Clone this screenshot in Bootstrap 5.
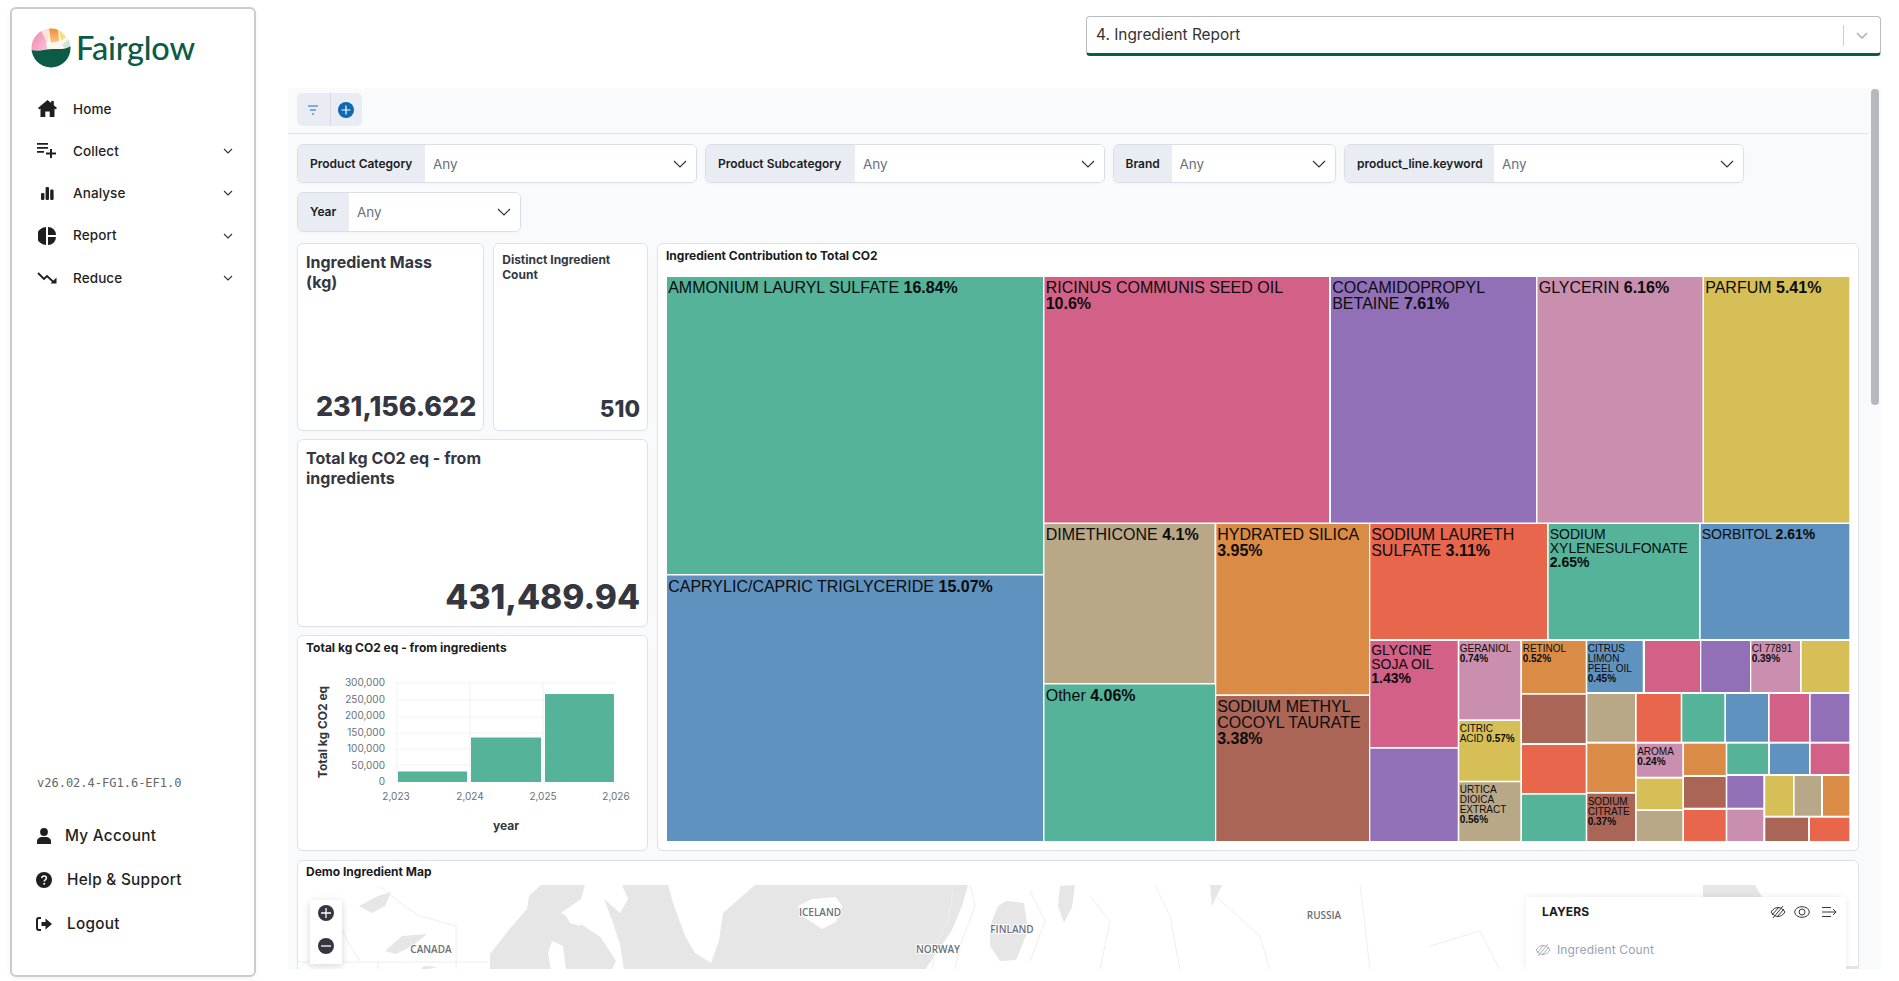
<!DOCTYPE html>
<html lang="en">
<head>
<meta charset="utf-8">
<title>Fairglow - Ingredient Report</title>
<link href="https://cdn.jsdelivr.net/npm/bootstrap@5.3.0/dist/css/bootstrap.min.css" rel="stylesheet">
<style>
html,body{height:100%;overflow:hidden;background:#fff}
body{font-family:Inter,"Liberation Sans",sans-serif;color:#1a1c21}
.app{height:981px}
.side{width:246px;height:970px;margin:7px 32px 0 10px;border:2px solid #ccc;border-radius:6px;flex:none;padding:0;box-shadow:0 2px 6px rgba(0,0,0,.05)}
.brand{height:78.5px;padding:0 0 0 19px;gap:5px;align-items:center}
.brand-name{font-family:Lato,Inter,sans-serif;font-size:32.5px;color:#0b5b46;font-weight:500;letter-spacing:-.2px;line-height:1;padding-top:0}
.side-link{height:42.3px;padding:0 21px 0 25px;color:#1f1f1f;font-size:13.5px;font-weight:500;letter-spacing:.1px}
.side-link:hover{color:#1f1f1f}
.ico{width:20px;flex:none;margin-right:16px;display:flex;justify-content:center}
.ver{font-family:"DejaVu Sans Mono","Liberation Mono",monospace;font-size:12px;color:#666;padding-left:25px;margin-bottom:23px;line-height:15px}
.foot-link{height:44px;padding:0 0 0 23px;color:#1f1f1f;font-size:15.3px;letter-spacing:.3px;font-weight:500}
.foot-link:hover{color:#1f1f1f}
.foot-ico{width:18px;margin-right:12px;flex:none;display:flex;justify-content:center}
.help-txt{padding-left:2px}
.foot-box{padding-bottom:29px}
.main-col{width:1593px;flex:none}
.top-row{height:88px;padding-top:16px}
.report-select{width:795px;height:40px;margin-left:auto;border:1px solid #bbb;border-bottom:3px solid #0b5b46;border-radius:4px;padding-left:9px;font-size:15.4px;color:#333}
.report-sep{width:1px;height:21px;background:#ccc;margin-left:auto}
.report-chev{width:36px;display:flex;justify-content:center}
.dash{height:881px;background:#f9fafc}
.tool-wrap{width:1580px;height:46px;padding:5px 9px 0;border-bottom:1px solid #dfe3e8}
.tool-group{height:33px;background:#e9edf3;border-radius:5px;width:65px}
.tool-btn{width:32.5px;display:flex;align-items:center;justify-content:center}
.tool-btn+.tool-btn{border-left:1px solid #d3dae6}
.filters{padding:9.5px 0 0 9px;row-gap:9px;column-gap:8px;width:1500px}
.fgroup{height:39.5px;border:1px solid #d9dfe8;border-radius:6px;background:#fff;overflow:hidden;box-shadow:0 1px 2px rgba(0,0,0,.03)}
.flabel{background:#e9edf3;font-size:12px;font-weight:600;color:#1a1c21;height:100%;padding:1px 0 0 12px;flex:none}
.fselect{height:100%;font-size:13.5px;color:#69707d;background-color:#fff;padding:1px 0 0 8px;flex:1 1 auto;display:flex;align-items:center;justify-content:space-between}
.fchev{margin-right:9px}
.w-cat{width:400px}.w-sub{width:399.500px}.w-brand{width:223.500px}.w-line{width:400px}.w-year{width:224px}
.l-cat{width:127px}.l-sub{width:149px}.l-brand{width:58px}.l-line{width:149px}.l-year{width:51px}
.grid-wrap{padding:11.500px 0 0 9px;width:1571px;gap:9px}
.col-left{width:351px;gap:8px;height:608px}
.col-right{width:1202px;height:608px}
.tile-card{--bs-card-border-color:#dde2ea;--bs-card-border-radius:6px;--bs-card-inner-border-radius:5px;background:#fff;box-shadow:0 1px 2px rgba(0,0,0,.02)}
.kpi-row{gap:9px;height:188px;flex:none}
.kpi-a{width:187.500px}.kpi-b{width:155px}
.kpi-c{height:188px;flex:none;padding:8px 7px 9px 8px}
.kpi-a,.kpi-b{padding:8px 7px 7px 8px}
.kpi-title{font-size:16px;line-height:20px;font-weight:650;color:#343741}
.kpi-title-sm{font-size:12px;line-height:15px;font-weight:650;color:#343741}
.kpi-val{text-align:right;font-weight:800;color:#343741;font-size:26.800px;line-height:30px;padding-bottom:2px}
.kpi-val-md{text-align:right;font-weight:800;color:#343741;font-size:22.500px;line-height:28px}
.kpi-val-lg{text-align:right;font-weight:800;color:#343741;font-size:33.500px;line-height:40px}
.chart-title{font-size:12px;font-weight:700;color:#1a1c21;line-height:15px}
.bar-card{height:216px;flex:none}
.bar-head{height:24px;padding:4px 0 0 8px}
.tm-head{height:33px;padding:4px 0 0 8px}
.tm-svg{display:block;margin-left:9px;width:1183px;height:564px}
.bar-svg{display:block;width:349px;height:190px}
.tlb{font-family:"Liberation Sans",Arial,sans-serif;fill:#0c0c0c;transform:translateX(-.8px)}
.t16{font-size:16px}.t14{font-size:14px}.t10{font-size:10px}
.pc{font-weight:700}
.tk{font-family:Inter,sans-serif;font-size:10px;fill:#69707d}
.ax{font-family:Inter,sans-serif;font-size:12px;font-weight:700;fill:#343741}
.grd{stroke:#f1f2f4;stroke-width:1}
.map-card{margin:9px 0 0 9px;width:1562px;height:140px}
.map-head{height:24px;padding:3px 0 0 8px}
.map-area{height:85px}
.map-svg{display:block;width:1560px;height:85px}
.ml{font-family:"Open Sans",sans-serif;font-size:10px;font-weight:600;fill:#6a6f78;paint-order:stroke;stroke:#fff;stroke-width:2px}
.zoom-box{position:absolute;left:12px;top:15px;width:32px;height:64px;background:#fff;box-shadow:0 2px 8px rgba(0,0,0,.16);display:flex;flex-direction:column;align-items:center;gap:17px;padding-top:5px}
.layers{position:absolute;left:1228px;top:12px;width:320px;height:73px;background:#fff;box-shadow:0 0 8px rgba(0,0,0,.08);padding:0 9px 0 16px}
.layers-head{height:30px;font-size:12px;font-weight:700;color:#1a1c21;letter-spacing:.1px}
.layers-row{margin-top:14px;font-size:12px;color:#98a2b3;margin-left:-7px;gap:6px;letter-spacing:.15px}
.scroll-thumb{position:absolute;right:2px;top:1px;width:8px;height:316px;border-radius:4px;background:#b5b9be}
.c-teal{fill:#54b399}.c-blue{fill:#6092c0}.c-pink{fill:#d36086}.c-purp{fill:#9170b8}.c-lpink{fill:#ca8eae}.c-yel{fill:#d6bf57}.c-tan{fill:#b9a888}.c-brn{fill:#aa6556}.c-org{fill:#da8b45}.c-red{fill:#e7664c}
</style>
</head>
<body>
<div class="app d-flex">
  <aside class="side d-flex flex-column bg-white">
    <div class="brand d-flex">
      <svg width="40" height="40" viewBox="0 0 40 40">
        <defs><clipPath id="lg"><circle cx="20" cy="20" r="19.500"/></clipPath>
        <linearGradient id="lgp" x1="0" y1="0" x2="1" y2="1"><stop offset="0" stop-color="#f07fb0"/><stop offset="1" stop-color="#fbc4d6"/></linearGradient>
        <linearGradient id="lgo" x1="0" y1="0" x2="0" y2="1"><stop offset="0" stop-color="#f28a2e"/><stop offset="1" stop-color="#fbc98a"/></linearGradient></defs>
        <g clip-path="url(#lg)">
          <rect width="40" height="40" fill="#fdf6ee"/>
          <path d="M0 24 L0 6 L9 0 L15 12 L16 21 Z" fill="url(#lgp)"/>
          <path d="M9 0 L17 16 L18 0 Z" fill="#fbe3d8"/>
          <path d="M18 0 L20 15 L28 13 L27 0 Z" fill="url(#lgo)"/>
          <path d="M28 1 L30 13 L35 9 Z" fill="#f6e07a"/>
          <path d="M31 17 L39 10 L40 19 L34 20Z" fill="#cfe5d8"/>
          <path d="M0 22 C8 24 14 21 22 21 C28 21 34 22 40 18 L40 40 L0 40 Z" fill="#0b5b46"/>
        </g>
      </svg>
      <span class="brand-name">Fairglow</span>
    </div>
    <nav class="nav flex-column">
      <a class="nav-link side-link d-flex align-items-center" href="#"><span class="ico"><svg width="19" height="17" viewBox="0 0 19 17"><path d="M9.500 0 L0 8 L1.200 9.400 L2.500 8.400 V17 H7.300 V11.500 H11.700 V17 H16.500 V8.400 L17.800 9.400 L19 8 L15.800 5.300 V1 H13.200 V3.100 Z" fill="#1f1f1f"/></svg></span>Home</a>
      <a class="nav-link side-link d-flex align-items-center" href="#"><span class="ico"><svg width="20" height="15" viewBox="0 0 20 15"><path d="M0 0h11v1.700H0zM0 4h11v1.700H0zM0 8h7v1.700H0zM13 6h2v3.500h4v2h-4V15h-2v-3.500H9v-2h4z" fill="#1f1f1f"/></svg></span><span class="flex-grow-1">Collect</span><svg width="10" height="6" viewBox="0 0 10 6"><path d="M1 1l4 4 4-4" fill="none" stroke="#333" stroke-width="1.100"/></svg></a>
      <a class="nav-link side-link d-flex align-items-center" href="#"><span class="ico"><svg width="13" height="13" viewBox="0 0 13 13"><rect x="0" y="6" width="3.400" height="7" rx="1.200" fill="#1f1f1f"/><rect x="4.600" y="0" width="3.400" height="13" rx="1.200" fill="#1f1f1f"/><rect x="9.200" y="2.500" width="3.400" height="10.500" rx="1.200" fill="#1f1f1f"/></svg></span><span class="flex-grow-1">Analyse</span><svg width="10" height="6" viewBox="0 0 10 6"><path d="M1 1l4 4 4-4" fill="none" stroke="#333" stroke-width="1.100"/></svg></a>
      <a class="nav-link side-link d-flex align-items-center" href="#"><span class="ico"><svg width="18" height="18" viewBox="0 0 18 18"><path d="M8 0 A9 9 0 0 0 8 18 Z M10 0 A8 8 0 0 1 18 8 H10 Z M10 10 H18 A8 8 0 0 1 10 18 Z" fill="#1f1f1f"/></svg></span><span class="flex-grow-1">Report</span><svg width="10" height="6" viewBox="0 0 10 6"><path d="M1 1l4 4 4-4" fill="none" stroke="#333" stroke-width="1.100"/></svg></a>
      <a class="nav-link side-link d-flex align-items-center" href="#"><span class="ico"><svg width="20" height="12" viewBox="0 0 20 12"><path d="M1 1l6 6 3-3 7 6.500" fill="none" stroke="#1f1f1f" stroke-width="1.800"/><path d="M19.500 5.500v6h-6z" fill="#1f1f1f"/></svg></span><span class="flex-grow-1">Reduce</span><svg width="10" height="6" viewBox="0 0 10 6"><path d="M1 1l4 4 4-4" fill="none" stroke="#333" stroke-width="1.100"/></svg></a>
    </nav>
    <div class="mt-auto foot-box">
      <div class="ver">v26.02.4-FG1.6-EF1.0</div>
      <nav class="nav flex-column">
        <a class="nav-link foot-link d-flex align-items-center" href="#"><span class="foot-ico"><svg width="14" height="16" viewBox="0 0 14 16"><circle cx="7" cy="4" r="3.900" fill="#1f1f1f"/><path d="M0 16v-2.500C0 10.500 2.500 9 5 9h4c2.500 0 5 1.500 5 4.500V16z" fill="#1f1f1f"/></svg></span>My Account</a>
        <a class="nav-link foot-link d-flex align-items-center" href="#"><span class="foot-ico"><svg width="16" height="16" viewBox="0 0 16 16"><circle cx="8" cy="8" r="8" fill="#1f1f1f"/><path d="M5.700 6.200C5.900 4.800 6.900 4.100 8.100 4.100c1.300 0 2.300.8 2.300 2 0 1.800-2.200 1.700-2.200 3.400" fill="none" stroke="#fff" stroke-width="1.500"/><circle cx="8.200" cy="11.800" r="1" fill="#fff"/></svg></span><span class="help-txt">Help &amp; Support</span></a>
        <a class="nav-link foot-link d-flex align-items-center" href="#"><span class="foot-ico"><svg width="16" height="14" viewBox="0 0 16 14"><path d="M5 1H3a2 2 0 0 0-2 2v8a2 2 0 0 0 2 2h2" fill="none" stroke="#1f1f1f" stroke-width="2"/><path d="M5.500 5h4V1.500L16 7l-6.500 5.500V9h-4z" fill="#1f1f1f"/></svg></span><span class="help-txt">Logout</span></a>
      </nav>
    </div>
  </aside>

  <main class="main-col">
    <div class="top-row d-flex">
      <div class="report-select d-flex align-items-center">
        <span>4. Ingredient Report</span>
        <span class="report-sep"></span>
        <span class="report-chev"><svg width="12" height="7" viewBox="0 0 12 7"><path d="M1 1l5 5 5-5" fill="none" stroke="#b3b3b3" stroke-width="1.600"/></svg></span>
      </div>
    </div>

    <section class="dash position-relative overflow-hidden">
      <div class="tool-wrap">
        <div class="tool-group d-flex">
          <div class="tool-btn"><svg width="12" height="10" viewBox="0 0 12 10"><path d="M1 1h10M3 5h6M5 9h2" stroke="#1272b8" stroke-width="1.100" fill="none"/></svg></div>
          <div class="tool-btn"><svg width="16" height="16" viewBox="0 0 16 16"><circle cx="8" cy="8" r="8" fill="#0f68b0"/><path d="M8 3.500v9M3.500 8h9" stroke="#fff" stroke-width="1.200"/></svg></div>
        </div>
      </div>

      <div class="filters d-flex flex-wrap">
        <div class="fgroup d-flex w-cat"><span class="flabel l-cat d-flex align-items-center">Product Category</span><span class="fselect">Any<svg class="fchev" width="14" height="8" viewBox="0 0 14 8"><path d="M1 1l6 6 6-6" fill="none" stroke="#343741" stroke-width="1.200"/></svg></span></div>
        <div class="fgroup d-flex w-sub"><span class="flabel l-sub d-flex align-items-center">Product Subcategory</span><span class="fselect">Any<svg class="fchev" width="14" height="8" viewBox="0 0 14 8"><path d="M1 1l6 6 6-6" fill="none" stroke="#343741" stroke-width="1.200"/></svg></span></div>
        <div class="fgroup d-flex w-brand"><span class="flabel l-brand d-flex align-items-center">Brand</span><span class="fselect">Any<svg class="fchev" width="14" height="8" viewBox="0 0 14 8"><path d="M1 1l6 6 6-6" fill="none" stroke="#343741" stroke-width="1.200"/></svg></span></div>
        <div class="fgroup d-flex w-line"><span class="flabel l-line d-flex align-items-center">product_line.keyword</span><span class="fselect">Any<svg class="fchev" width="14" height="8" viewBox="0 0 14 8"><path d="M1 1l6 6 6-6" fill="none" stroke="#343741" stroke-width="1.200"/></svg></span></div>
        <div class="fgroup d-flex w-year"><span class="flabel l-year d-flex align-items-center">Year</span><span class="fselect">Any<svg class="fchev" width="14" height="8" viewBox="0 0 14 8"><path d="M1 1l6 6 6-6" fill="none" stroke="#343741" stroke-width="1.200"/></svg></span></div>
      </div>

      <div class="grid-wrap d-flex">
        <div class="col-left d-flex flex-column">
          <div class="kpi-row d-flex">
            <div class="card tile-card kpi-a justify-content-between"><div class="kpi-title">Ingredient Mass<br>(kg)</div><div class="kpi-val">231,156.622</div></div>
            <div class="card tile-card kpi-b justify-content-between"><div class="kpi-title-sm">Distinct Ingredient Count</div><div class="kpi-val-md">510</div></div>
          </div>
          <div class="card tile-card kpi-c justify-content-between"><div class="kpi-title">Total kg CO2 eq - from<br>ingredients</div><div class="kpi-val-lg">431,489.94</div></div>
          <div class="card tile-card bar-card">
            <div class="bar-head chart-title">Total kg CO2 eq - from ingredients</div>
            <svg class="bar-svg" viewBox="298 660 349 190">
              <g class="grd"><path d="M397 683H616M397 700H616M397 717H616M397 733H616M397 749H616M397 765H616"/><path d="M397 682V782M470 682V782M543 682V782"/></g>
              <rect x="398" y="771.500" width="69" height="10.500" class="c-teal"/>
              <rect x="471" y="737.500" width="70" height="44.500" class="c-teal"/>
              <rect x="545" y="694" width="69" height="88" class="c-teal"/>
              <g class="tk" text-anchor="end">
                <text x="385" y="686">300,000</text><text x="385" y="703">250,000</text><text x="385" y="719">200,000</text><text x="385" y="736">150,000</text><text x="385" y="752">100,000</text><text x="385" y="769">50,000</text><text x="385" y="785">0</text>
              </g>
              <g class="tk" text-anchor="middle">
                <text x="396" y="800">2,023</text><text x="470" y="800">2,024</text><text x="543" y="800">2,025</text><text x="616" y="800">2,026</text>
              </g>
              <text class="ax" x="506" y="830" text-anchor="middle">year</text>
              <text class="ax" text-anchor="middle" transform="translate(326.500 732) rotate(-90)">Total kg CO2 eq</text>
            </svg>
          </div>
        </div>
        <div class="col-right card tile-card">
          <div class="tm-head chart-title">Ingredient Contribution to Total CO2</div>
          <svg class="tm-svg" viewBox="667 277 1183 564">
            <rect x="667" y="277" width="376" height="297" class="c-teal"/>
            <rect x="667" y="575.500" width="376" height="265.500" class="c-blue"/>
            <rect x="1044.500" y="277" width="284.500" height="245.500" class="c-pink"/>
            <rect x="1331" y="277" width="205" height="245.500" class="c-purp"/>
            <rect x="1537.500" y="277" width="165" height="245.500" class="c-lpink"/>
            <rect x="1704" y="277" width="145.300" height="245.500" class="c-yel"/>
            <rect x="1044.500" y="524" width="170" height="159" class="c-tan"/>
            <rect x="1044.500" y="684.500" width="170.500" height="156.500" class="c-teal"/>
            <rect x="1216.300" y="524" width="152.700" height="170.300" class="c-org"/>
            <rect x="1216.300" y="696" width="152.700" height="145" class="c-brn"/>
            <rect x="1370.300" y="524" width="176.700" height="115" class="c-red"/>
            <rect x="1548.700" y="524" width="150.300" height="115" class="c-teal"/>
            <rect x="1700.700" y="524" width="148.600" height="115" class="c-blue"/>
            <rect x="1370.300" y="641" width="87.400" height="106" class="c-pink"/>
            <rect x="1370.300" y="748.700" width="87.400" height="92.300" class="c-purp"/>
            <rect x="1459.300" y="641" width="61" height="78.300" class="c-lpink"/>
            <rect x="1459.300" y="721" width="61" height="59.700" class="c-yel"/>
            <rect x="1459.300" y="782.300" width="61" height="58.700" class="c-tan"/>
            <rect x="1522" y="641" width="63.700" height="52" class="c-org"/>
            <rect x="1522" y="694.700" width="63.700" height="48.300" class="c-brn"/>
            <rect x="1522" y="745" width="63.700" height="48" class="c-red"/>
            <rect x="1522" y="794.700" width="63.700" height="46.300" class="c-teal"/>
            <rect x="1587.300" y="641" width="55.400" height="51" class="c-blue"/>
            <rect x="1645" y="641" width="55" height="51" class="c-pink"/>
            <rect x="1701.300" y="641" width="48.700" height="51" class="c-purp"/>
            <rect x="1751.300" y="641" width="48.700" height="51" class="c-lpink"/>
            <rect x="1801.700" y="641" width="47.600" height="51" class="c-yel"/>
            <rect x="1587.300" y="694" width="47.700" height="47.700" class="c-tan"/>
            <rect x="1587.300" y="743.700" width="47.700" height="48.300" class="c-org"/>
            <rect x="1587.300" y="793.700" width="47.700" height="47.300" class="c-brn"/>
            <rect x="1636.700" y="694" width="44" height="47.700" class="c-red"/>
            <rect x="1682.300" y="694" width="42" height="47.700" class="c-teal"/>
            <rect x="1726" y="694" width="42" height="47.700" class="c-blue"/>
            <rect x="1769.700" y="694" width="39.300" height="47.700" class="c-pink"/>
            <rect x="1810.700" y="694" width="38.600" height="47.700" class="c-purp"/>
            <rect x="1636.700" y="743.700" width="45.600" height="33" class="c-lpink"/>
            <rect x="1684" y="743.700" width="41.700" height="31.300" class="c-org"/>
            <rect x="1727.300" y="743.700" width="40.700" height="30.300" class="c-teal"/>
            <rect x="1770" y="743.700" width="39" height="30.300" class="c-blue"/>
            <rect x="1810.700" y="743.700" width="38.600" height="30.300" class="c-pink"/>
            <rect x="1636.700" y="778.700" width="45.600" height="30.600" class="c-yel"/>
            <rect x="1636.700" y="811" width="45.600" height="30" class="c-tan"/>
            <rect x="1684" y="777" width="41.700" height="30.700" class="c-brn"/>
            <rect x="1684" y="810" width="41.700" height="31" class="c-red"/>
            <rect x="1727.300" y="776" width="36" height="31.700" class="c-purp"/>
            <rect x="1727.300" y="809.700" width="36" height="31.300" class="c-lpink"/>
            <rect x="1765.300" y="776" width="27.700" height="39.700" class="c-yel"/>
            <rect x="1794.700" y="776" width="26.300" height="39.700" class="c-tan"/>
            <rect x="1823" y="776" width="26.300" height="39.700" class="c-org"/>
            <rect x="1765.300" y="817.700" width="42.700" height="23.300" class="c-brn"/>
            <rect x="1810" y="817.700" width="39.300" height="23.300" class="c-red"/>

            <g class="tlb t16">
              <text x="669" y="293">AMMONIUM LAURYL SULFATE <tspan class="pc">16.84%</tspan></text>
              <text x="669" y="591.500">CAPRYLIC/CAPRIC TRIGLYCERIDE <tspan class="pc">15.07%</tspan></text>
              <text x="1046.500" y="293">RICINUS COMMUNIS SEED OIL</text><text x="1046.500" y="309" class="pc">10.6%</text>
              <text x="1333" y="293">COCAMIDOPROPYL</text><text x="1333" y="309">BETAINE <tspan class="pc">7.61%</tspan></text>
              <text x="1539.500" y="293">GLYCERIN <tspan class="pc">6.16%</tspan></text>
              <text x="1706" y="293">PARFUM <tspan class="pc">5.41%</tspan></text>
              <text x="1046.500" y="540">DIMETHICONE <tspan class="pc">4.1%</tspan></text>
              <text x="1046.500" y="701">Other <tspan class="pc">4.06%</tspan></text>
              <text x="1218" y="540">HYDRATED SILICA</text><text x="1218" y="556" class="pc">3.95%</text>
              <text x="1218" y="712">SODIUM METHYL</text><text x="1218" y="728">COCOYL TAURATE</text><text x="1218" y="744" class="pc">3.38%</text>
              <text x="1372" y="540">SODIUM LAURETH</text><text x="1372" y="556">SULFATE <tspan class="pc">3.11%</tspan></text>
            </g>
            <g class="tlb t14">
              <text x="1550.500" y="539">SODIUM</text><text x="1550.500" y="553">XYLENESULFONATE</text><text x="1550.500" y="567" class="pc">2.65%</text>
              <text x="1702.500" y="539">SORBITOL <tspan class="pc">2.61%</tspan></text>
              <text x="1372" y="655">GLYCINE</text><text x="1372" y="669">SOJA OIL</text><text x="1372" y="683" class="pc">1.43%</text>
            </g>
            <g class="tlb t10">
              <text x="1460.500" y="652">GERANIOL</text><text x="1460.500" y="662" class="pc">0.74%</text>
              <text x="1460.500" y="732">CITRIC</text><text x="1460.500" y="742">ACID <tspan class="pc">0.57%</tspan></text>
              <text x="1460.500" y="793">URTICA</text><text x="1460.500" y="803">DIOICA</text><text x="1460.500" y="813">EXTRACT</text><text x="1460.500" y="823" class="pc">0.56%</text>
              <text x="1523.500" y="652">RETINOL</text><text x="1523.500" y="662" class="pc">0.52%</text>
              <text x="1588.500" y="652">CITRUS</text><text x="1588.500" y="662">LIMON</text><text x="1588.500" y="672">PEEL OIL</text><text x="1588.500" y="682" class="pc">0.45%</text>
              <text x="1752.500" y="652">CI 77891</text><text x="1752.500" y="662" class="pc">0.39%</text>
              <text x="1638" y="755">AROMA</text><text x="1638" y="765" class="pc">0.24%</text>
              <text x="1588.500" y="804.500">SODIUM</text><text x="1588.500" y="814.500">CITRATE</text><text x="1588.500" y="824.500" class="pc">0.37%</text>
            </g>
          </svg>
        </div>
      </div>

      <div class="card tile-card map-card">
        <div class="map-head chart-title">Demo Ingredient Map</div>
        <div class="map-area position-relative">
          <svg class="map-svg" viewBox="298 884 1560 85">
            <rect x="298" y="884" width="1560" height="85" fill="#fff"/>
            <g fill="#e6e6e6">
              <path d="M490 969V953L510 927.500 527 908 529 895 541 884H585L581 898 561 912 577 920.500 600.500 936 616 960 612 969H566L563 945 552 940 548 952 551 969Z"/>
              <path d="M622 884H668L674 905 685.500 936 695 952 711 962 719 939.600 723 912 735 901.500 755 884H968L962 905 952 929 925 969H624L620 943 612 919 604 898 620 912 628 898Z"/>
              <path d="M359 905 378 895 391 891 385 905 372 912Z"/>
              <path d="M385 950 402 935 427 933 412 945 396 953Z"/>
              <path d="M420 969 424 965 438 966 424 969Z"/>
              <path d="M990 925 998 905 1006 900 1024 902 1028 930 1016 959 1000 960 990 945Z"/>
              <path d="M1060 885 1075 884 1072 906 1064 922 1058 905Z"/>
              <path d="M1210 884H1222L1212 905Z"/>
              <path d="M1703 884H1755L1762 896H1703Z"/>
              <path d="M1846 965H1858V969H1846Z"/>
            </g>
            <path d="M798 905 812 898 836 896 842 905 836 921 822 928 804 916Z" fill="#fff"/>
            <path d="M572 908 584 915 580 925 570 922 566 915Z" fill="#fff"/>
            <g fill="none" stroke="#eeeeee" stroke-width="1">
              <path d="M380 885 404 905 420 915 456 925V969M298 961H488M378 961V969M340 925 350 945 360 960"/>
              <path d="M298 968 306 961 314 968M953 890 948 920 935 945 932 969M970 884 975 905 960 945 955 969"/>
              <path d="M1030 890 1045 920 1030 960M1090 895 1110 920 1100 969M1155 884 1170 915 1180 969M1215 895 1260 935 1270 969M1360 884 1365 925 1370 969M1430 945 1480 930 1500 969"/>
            </g>
            <text class="ml" x="431" y="952" text-anchor="middle">CANADA</text>
            <text class="ml" x="820" y="914.500" text-anchor="middle">ICELAND</text>
            <text class="ml" x="938" y="952" text-anchor="middle">NORWAY</text>
            <text class="ml" x="1012" y="932" text-anchor="middle">FINLAND</text>
            <text class="ml" x="1324" y="917.500" text-anchor="middle">RUSSIA</text>
          </svg>
          <div class="zoom-box">
            <svg width="16" height="16" viewBox="0 0 16 16"><circle cx="8" cy="8" r="8" fill="#343741"/><path d="M8 3v10M3 8h10" stroke="#fff" stroke-width="1.300"/></svg>
            <svg width="16" height="16" viewBox="0 0 16 16"><circle cx="8" cy="8" r="8" fill="#343741"/><path d="M3 8h10" stroke="#fff" stroke-width="1.300"/></svg>
          </div>
          <div class="layers">
            <div class="layers-head d-flex align-items-center justify-content-between">
              <span>LAYERS</span>
              <span class="d-flex align-items-center gap-2">
                <svg width="16" height="14" viewBox="0 0 16 14"><path d="M1 7c2-3 4.500-4.500 7-4.500S13 4 15 7c-2 3-4.500 4.500-7 4.500S3 10 1 7z" fill="none" stroke="#343741" stroke-width="1"/><path d="M3 13 13 1M7 12 14 4M2 10 9 2" stroke="#343741" stroke-width="1"/></svg>
                <svg width="16" height="12" viewBox="0 0 16 12"><ellipse cx="8" cy="6" rx="7.300" ry="5.300" fill="none" stroke="#343741"/><circle cx="8" cy="6" r="3" fill="none" stroke="#343741"/></svg>
                <svg class="ms-1" width="15" height="10" viewBox="0 0 15 10"><path d="M0 .5h9M0 5h14M0 9.500h9M11 2l3 3-3 3" fill="none" stroke="#343741" stroke-width="1"/></svg>
              </span>
            </div>
            <div class="layers-row d-flex align-items-center">
              <svg width="16" height="14" viewBox="0 0 16 14"><path d="M1 7c2-3 4.500-4.500 7-4.500S13 4 15 7c-2 3-4.500 4.500-7 4.500S3 10 1 7z" fill="none" stroke="#a8aeb8" stroke-width="1"/><path d="M3 13 13 1M7 12 14 4M2 10 9 2" stroke="#a8aeb8" stroke-width="1"/></svg>
              <span>Ingredient Count</span>
            </div>
          </div>
        </div>
      </div>
      <div class="scroll-thumb"></div>
    </section>
  </main>
</div>
<script src="https://cdn.jsdelivr.net/npm/bootstrap@5.3.0/dist/js/bootstrap.bundle.min.js"></script>
</body>
</html>
